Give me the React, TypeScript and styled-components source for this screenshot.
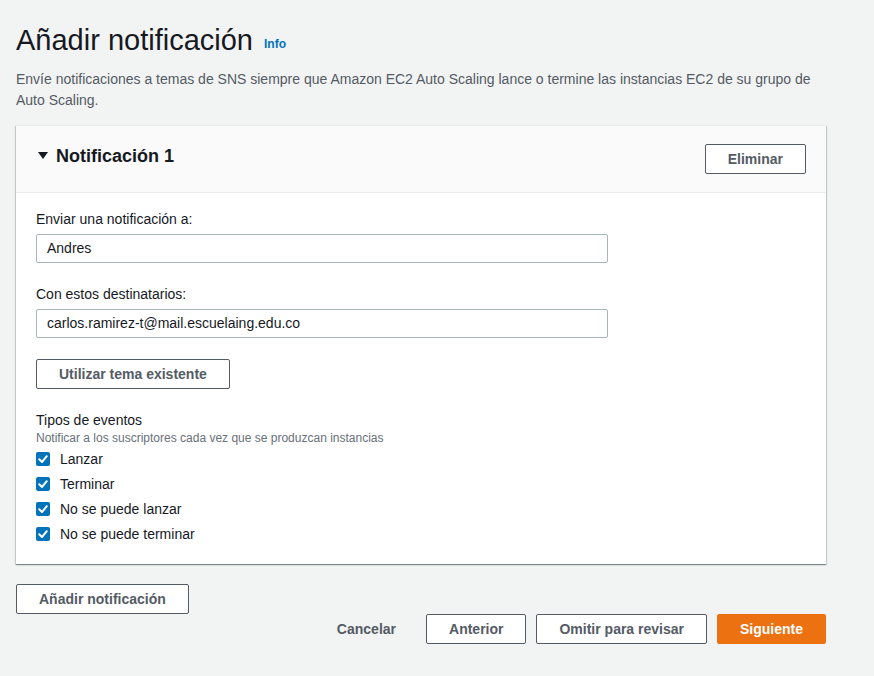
import React from 'react';
import styled, { createGlobalStyle } from 'styled-components';

const GlobalStyle = createGlobalStyle`
  body {
    margin: 0;
    background: #f2f3f3;
    font-family: 'Liberation Sans', Arial, sans-serif;
    color: #16191f;
  }
`;

const events = ['Lanzar', 'Terminar', 'No se puede lanzar', 'No se puede terminar'];

function App() {
  return (
    <>
      <GlobalStyle />
      <Page>
        <TitleRow>
          <Title>Añadir notificación</Title>
          <InfoLink>Info</InfoLink>
        </TitleRow>
        <Description>
          Envíe notificaciones a temas de SNS siempre que Amazon EC2 Auto Scaling lance o termine las instancias EC2 de su grupo de
          <br />
          Auto Scaling.
        </Description>

        <Card>
          <CardHeader>
            <HeaderTitle>
              <svg width='10' height='7' viewBox='0 0 10 7'>
                <polygon points='0,0 10,0 5,7' fill='#16191f' />
              </svg>
              Notificación 1
            </HeaderTitle>
            <Button>Eliminar</Button>
          </CardHeader>

          <CardBody>
            <Field>
              <Label>Enviar una notificación a:</Label>
              <Input>Andres</Input>
            </Field>
            <Field>
              <Label>Con estos destinatarios:</Label>
              <Input>carlos.ramirez-t@mail.escuelaing.edu.co</Input>
            </Field>
            <ButtonRow>
              <Button>Utilizar tema existente</Button>
            </ButtonRow>
            <EventGroup>
              <GroupTitle>Tipos de eventos</GroupTitle>
              <GroupHint>Notificar a los suscriptores cada vez que se produzcan instancias</GroupHint>
              <CheckList>
                {events.map((e) => (
                  <CheckRow key={e}>
                    <CheckBox>
                      <svg width='14' height='14' viewBox='0 0 14 14'>
                        <polyline
                          points='3.2,7.2 6,10 10.8,4.2'
                          fill='none'
                          stroke='#fff'
                          strokeWidth='2'
                          strokeLinecap='round'
                          strokeLinejoin='round'
                        />
                      </svg>
                    </CheckBox>
                    {e}
                  </CheckRow>
                ))}
              </CheckList>
            </EventGroup>
          </CardBody>
        </Card>

        <AddRow>
          <Button>Añadir notificación</Button>
        </AddRow>

        <Actions>
          <LinkButton>Cancelar</LinkButton>
          <Button>Anterior</Button>
          <Button>Omitir para revisar</Button>
          <Button $primary>Siguiente</Button>
        </Actions>
      </Page>
    </>
  );
}

const Page = styled.div`
  padding: 22px 48px 32px 16px;
`;

const TitleRow = styled.div`
  display: flex;
  align-items: baseline;
`;

const Title = styled.h1`
  margin: 0;
  font-size: 29px;
  line-height: 36px;
  font-weight: 400;
  color: #16191f;
`;

const InfoLink = styled.a`
  margin-left: 11px;
  font-size: 12px;
  font-weight: 700;
  color: #0073bb;
  position: relative;
  top: -2px;
`;

const Description = styled.p`
  margin: 11px 0 14px;
  font-size: 14px;
  line-height: 21px;
  color: #545b64;
`;

const Card = styled.section`
  background: #fff;
  border-top: 1px solid #eaeded;
  box-shadow: 0 1px 1px 0 rgba(0, 28, 36, 0.3), 1px 1px 1px 0 rgba(0, 28, 36, 0.15),
    -1px 1px 1px 0 rgba(0, 28, 36, 0.15);
`;

const CardHeader = styled.header`
  display: flex;
  justify-content: space-between;
  align-items: flex-start;
  padding: 18px 20px 18px;
  background: #fafafa;
  border-bottom: 1px solid #eaeded;
`;

const HeaderTitle = styled.h2`
  display: flex;
  align-items: center;
  gap: 8px;
  margin: 0;
  font-size: 18px;
  line-height: 24px;
  font-weight: 700;
  color: #16191f;

  svg {
    margin-left: 2px;
    margin-top: -2px;
  }
`;

const CardBody = styled.div`
  display: flex;
  flex-direction: column;
  gap: 20px;
  padding: 16px 20px 20px;
`;

const Field = styled.div`
  display: flex;
  flex-direction: column;
  gap: 5px;

  & + & {
    margin-top: 1px;
  }
`;

const Label = styled.label`
  font-size: 14px;
  line-height: 20px;
  color: #16191f;
`;

const Input = styled.div`
  box-sizing: border-box;
  width: 572px;
  height: 29px;
  padding: 0 10px;
  border: 1px solid #aab7b8;
  border-radius: 2px;
  background: #fff;
  font-size: 14px;
  line-height: 27px;
  color: #16191f;
`;

const ButtonRow = styled.div`
  margin-top: 1px;
`;

const EventGroup = styled.div`
  margin-top: 1px;
`;

const Button = styled.button<{ $primary?: boolean }>`
  box-sizing: border-box;
  height: 30px;
  padding: 0 22px;
  border: 1px solid ${(p) => (p.$primary ? '#ec7211' : '#545b64')};
  border-radius: 2px;
  background: ${(p) => (p.$primary ? '#ec7211' : '#fff')};
  color: ${(p) => (p.$primary ? '#fff' : '#545b64')};
  font-family: inherit;
  font-size: 14px;
  font-weight: 700;
  cursor: pointer;
`;

const LinkButton = styled.button`
  height: 30px;
  padding: 0 20px;
  border: none;
  background: transparent;
  color: #545b64;
  font-family: inherit;
  font-size: 14px;
  font-weight: 700;
`;

const GroupTitle = styled.div`
  font-size: 14px;
  line-height: 20px;
  color: #16191f;
`;

const GroupHint = styled.div`
  font-size: 12px;
  line-height: 16px;
  color: #687078;
`;

const CheckList = styled.div`
  display: flex;
  flex-direction: column;
  gap: 5px;
  margin-top: 3px;
`;

const CheckRow = styled.label`
  display: flex;
  align-items: center;
  gap: 10px;
  font-size: 14px;
  line-height: 20px;
  color: #16191f;
`;

const CheckBox = styled.span`
  display: flex;
  width: 14px;
  height: 14px;
  border-radius: 2px;
  background: #0073bb;
`;

const AddRow = styled.div`
  margin-top: 20px;
`;

const Actions = styled.div`
  display: flex;
  justify-content: flex-end;
  gap: 10px;
`;

export default App;
